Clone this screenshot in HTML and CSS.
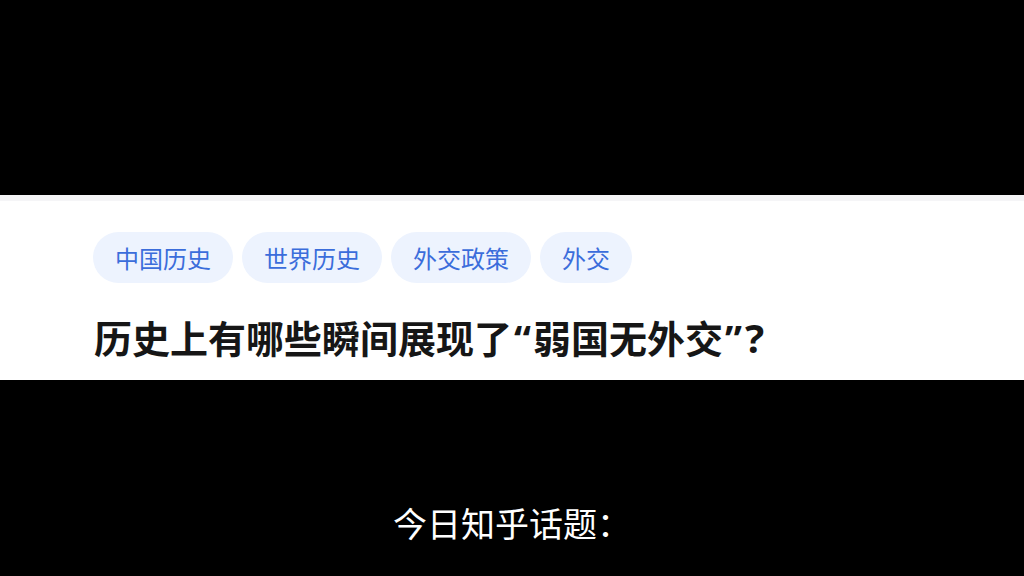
FILE: index.html
```html
<!DOCTYPE html>
<html lang="zh-CN">
<head>
<meta charset="utf-8">
<title>今日知乎话题</title>
<link rel="stylesheet" href="styles.css">
</head>
<body>
<div class="screen">
  <div class="top-black"></div>
  <section class="card">
    <div class="card-strip"></div>
    <div class="card-body">
      <div class="tags">
        <span class="tag">中国历史</span>
        <span class="tag">世界历史</span>
        <span class="tag">外交政策</span>
        <span class="tag">外交</span>
      </div>
      <h1 class="title">历史上有哪些瞬间展现了<span class="q">“</span>弱国无外交<span class="q">”</span><span class="qm">?</span></h1>
    </div>
  </section>
  <div class="bottom-black">
    <p class="caption">今日知乎话题：</p>
  </div>
</div>
</body>
</html>
```

FILE: styles.css
```css
html, body {
  margin: 0;
  padding: 0;
  background: #000;
}
.screen {
  width: 1024px;
  height: 576px;
  display: flex;
  flex-direction: column;
  background: #000;
  overflow: hidden;
  font-family: "Noto Sans CJK SC", "Noto Sans", sans-serif;
}
.top-black {
  height: 195px;
  flex: none;
}
.card {
  flex: none;
  height: 185px;
  background: #fff;
  display: flex;
  flex-direction: column;
}
.card-strip {
  height: 6px;
  background: #f5f5f7;
}
.card-body {
  padding: 31px 0 0 93px;
  display: flex;
  flex-direction: column;
}
.tags {
  display: flex;
  gap: 9px;
}
.tag {
  height: 51px;
  line-height: 51px;
  padding: 0 22px;
  border-radius: 26px;
  background: #edf3fe;
  color: #3b6ddb;
  font-size: 24px;
  font-weight: 400;
}
.title {
  margin: 29px 0 0 1px;
  font-size: 38px;
  line-height: 50px;
  font-weight: 700;
  color: #161616;
  white-space: nowrap;
}
.q {
  font-family: "Noto Sans", "DejaVu Sans", sans-serif;
  margin: 0 2px;
}
.qm {
  font-family: "Noto Sans", "DejaVu Sans", sans-serif;
  font-size: 40px;
  margin-left: 1px;
}
.bottom-black {
  flex: 1;
  display: flex;
  justify-content: center;
}
.caption {
  margin: 121px 0 0 0;
  color: #fff;
  font-size: 34px;
  line-height: 44px;
  font-weight: 400;
}
```
